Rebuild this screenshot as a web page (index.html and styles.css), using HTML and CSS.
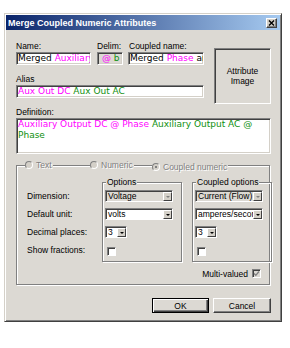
FILE: index.html
```html
<!DOCTYPE html>
<html lang="en">
<head>
    <meta charset="UTF-8">
    <meta name="viewport" content="width=device-width, initial-scale=1.0">
    <title>Merge Coupled Numeric Attributes</title>
    <link rel="stylesheet" href="styles.css">
</head>
<body>
    <div class="dialog">
        <div class="titlebar">
            <span class="title">Merge Coupled Numeric Attributes</span>
            <span class="close">
                <svg width="7" height="6" viewBox="0 0 7 6"><path d="M1 0.5L6 5.5M6 0.5L1 5.5" stroke="#000" stroke-width="1.4"/></svg>
            </span>
        </div>

        <div class="content">
            <div class="top">
                <div class="fields">
                    <div class="names">
                        <div class="field name-field">
                            <label>Name:</label>
                            <div class="edit">Merged <span class="pink">Auxiliary Output DC</span></div>
                        </div>
                        <div class="field delim-field">
                            <label>Delim:</label>
                            <div class="edit readonly">&nbsp;<span class="pink">@</span> <span class="green">b</span></div>
                        </div>
                        <div class="field coupled-field">
                            <label>Coupled name:</label>
                            <div class="edit">Merged <span class="pink">Phase</span> and</div>
                        </div>
                    </div>
                    <div class="field alias-field">
                        <label>Alias</label>
                        <div class="edit"><span class="pink">Aux Out DC</span> <span class="green">Aux Out AC</span></div>
                    </div>
                </div>
                <div class="image-box">Attribute<br>Image</div>
            </div>

            <div class="field definition-field">
                <label>Definition:</label>
                <div class="edit memo"><span class="pink">Auxiliary Output DC @ Phase</span> <span class="green">Auxiliary Output AC @ Phase</span></div>
            </div>

            <div class="groupbox kind">
                <div class="radios">
                    <div class="radio-cell"><span class="radio"><span class="dot"></span><span class="off">Text</span></span></div>
                    <div class="radio-cell"><span class="radio"><span class="dot"></span><span class="off">Numeric</span></span></div>
                    <div class="radio-cell"><span class="radio"><span class="dot checked"></span><span class="off">Coupled numeric</span></span></div>
                </div>

                <div class="opts">
                    <div class="row-labels cells">
                        <div class="cell">Dimension:</div>
                        <div class="cell">Default unit:</div>
                        <div class="cell">Decimal places:</div>
                        <div class="cell">Show fractions:</div>
                    </div>

                    <div class="groupbox optbox">
                        <div class="boxtitle">Options</div>
                        <div class="cells">
                            <div class="combo disabled"><span class="combo-text">Voltage</span><span class="arrow"></span></div>
                            <div class="combo"><span class="combo-text">volts</span><span class="arrow"></span></div>
                            <div class="combo small"><span class="combo-text">3</span><span class="arrow"></span></div>
                            <div class="cell"><span class="check"></span></div>
                        </div>
                    </div>

                    <div class="groupbox optbox">
                        <div class="boxtitle">Coupled options</div>
                        <div class="cells">
                            <div class="combo disabled"><span class="combo-text">Current (Flow)</span><span class="arrow"></span></div>
                            <div class="combo"><span class="combo-text">amperes/second</span><span class="arrow"></span></div>
                            <div class="combo small"><span class="combo-text">3</span><span class="arrow"></span></div>
                            <div class="cell"><span class="check"></span></div>
                        </div>
                    </div>
                </div>

                <div class="multi">
                    <span>Multi-valued</span>
                    <span class="check disabled">
                        <svg width="7" height="7" viewBox="0 0 7 7"><path d="M1 3.5L2.8 5.3L6 1.5" stroke="#808080" stroke-width="1.3" fill="none"/></svg>
                    </span>
                </div>
            </div>

            <div class="buttons">
                <button type="button" class="btn default">OK</button>
                <button type="button" class="btn">Cancel</button>
            </div>
        </div>
    </div>
</body>
</html>
```

FILE: styles.css
```css
body {
    margin: 0;
    padding: 13px 0 0 4px;
    background: #fff;
    font-family: "Liberation Sans", Arial, sans-serif;
    font-size: 8.5px;
    color: #000;
}
.dialog {
    width: 278px;
    box-sizing: border-box;
    padding: 1px;
    background: #dcd9d3;
    border: 1px solid;
    border-color: #d4d0c8 #404040 #404040 #d4d0c8;
    box-shadow: inset 1px 1px #fff, inset -1px -1px #808080;
}
.titlebar {
    height: 15px;
    display: flex;
    align-items: center;
    justify-content: space-between;
    padding: 0 3px 0 2px;
    background: linear-gradient(to right, #0a246a, #a6caf0);
    color: #fff;
    font-weight: bold;
    font-size: 9px;
}
.close {
    width: 11px;
    height: 10px;
    box-sizing: border-box;
    display: flex;
    align-items: center;
    justify-content: center;
    background: #d4d0c8;
    border: 1px solid;
    border-color: #fff #404040 #404040 #fff;
    box-shadow: inset -1px -1px #808080;
}
.content {
    padding: 11px 9px 7px 10px;
}
.top {
    display: grid;
    grid-template-columns: 188px 57px;
    column-gap: 10px;
}
.names {
    display: flex;
}
.name-field {
    width: 75px;
}
.delim-field {
    width: 26px;
    margin-left: 6px;
}
.coupled-field {
    width: 76px;
    margin-left: 5px;
}
label {
    display: block;
    height: 11px;
    line-height: 11px;
}
.coupled-field label {
    padding-left: 1px;
}
.edit {
    height: 13px;
    box-sizing: border-box;
    padding: 0 1px;
    background: #fff;
    border: 1px solid;
    border-color: #808080 #fff #fff #808080;
    box-shadow: inset 1px 1px #404040, inset -1px -1px #d4d0c8;
    font-family: "DejaVu Sans", Verdana, sans-serif;
    font-size: 9px;
    line-height: 11px;
    white-space: nowrap;
    overflow: hidden;
}
.edit.readonly {
    background: #dcd9d3;
}
.alias-field {
    margin-top: 9px;
}
.image-box {
    margin-top: 7px;
    height: 56px;
    box-sizing: border-box;
    display: flex;
    align-items: center;
    justify-content: center;
    text-align: center;
    line-height: 10px;
    border: 1px solid;
    border-color: #808080 #fff #fff #808080;
    box-shadow: inset 1px 1px #404040;
}
.definition-field {
    margin-top: 3px;
}
.edit.memo {
    height: 36px;
    white-space: normal;
}
.pink {
    color: #ff00ff;
}
.green {
    color: #109010;
}

/* etched group boxes */
.groupbox {
    box-sizing: border-box;
    border: 1px solid #808080;
    box-shadow: inset 1px 1px #fff, 1px 1px #fff;
}
.kind {
    width: 254px;
    margin-top: 11px;
    padding: 0 7px 6px 10px;
}
.radios {
    display: grid;
    grid-template-columns: 65px 62px auto;
    height: 10px;
    margin: -6px 0 0 -2px;
}
.radio {
    display: inline-flex;
    align-items: center;
    height: 10px;
    padding-right: 1px;
    background: #dcd9d3;
}
.dot {
    width: 8px;
    height: 8px;
    box-sizing: border-box;
    border-radius: 50%;
    border: 1px solid;
    border-color: #808080 #fff #fff #808080;
    background: #d4d0c8;
    display: flex;
    align-items: center;
    justify-content: center;
}
.dot.checked::after {
    content: "";
    width: 2px;
    height: 2px;
    background: #808080;
}
.off {
    margin-left: 3px;
    color: #808080;
    text-shadow: 1px 1px #fff;
}
.opts {
    display: grid;
    grid-template-columns: 65px 80px 80px;
    column-gap: 10px;
    margin-top: 12px;
}
.cells {
    display: flex;
    flex-direction: column;
    gap: 6px;
}
.row-labels {
    padding-top: 8px;
}
.cell {
    height: 12px;
    line-height: 12px;
}
.optbox {
    padding: 0 8px 5px 2px;
}
.boxtitle {
    width: fit-content;
    height: 10px;
    line-height: 10px;
    margin: -6px 0 3px 1px;
    padding: 0 1px;
    background: #dcd9d3;
}
.combo {
    width: 68px;
    height: 12px;
    box-sizing: border-box;
    display: flex;
    background: #fff;
    border: 1px solid;
    border-color: #808080 #fff #fff #808080;
    box-shadow: inset 1px 1px #404040;
}
.combo.disabled {
    background: #dcd9d3;
}
.combo.small {
    width: 22px;
}
.combo-text {
    flex: 1;
    padding-left: 2px;
    line-height: 10px;
    white-space: nowrap;
    overflow: hidden;
}
.arrow {
    width: 9px;
    margin: 1px 0 0 0;
    box-sizing: border-box;
    display: flex;
    align-items: center;
    justify-content: center;
    background: #d4d0c8;
    border: 1px solid;
    border-color: #fff #404040 #404040 #fff;
}
.arrow::after {
    content: "";
    border: 2px solid transparent;
    border-top: 2px solid #000;
    border-bottom: 0;
}
.combo.disabled .arrow::after {
    border-top-color: #808080;
}
.check {
    display: flex;
    align-items: center;
    justify-content: center;
    width: 9px;
    height: 9px;
    box-sizing: border-box;
    margin: 3px 0 0 2px;
    background: #fff;
    border: 1px solid;
    border-color: #808080 #fff #fff #808080;
    box-shadow: inset 1px 1px #404040;
}
.check.disabled {
    margin: 0;
    background: #dcd9d3;
}
.multi {
    display: flex;
    justify-content: flex-end;
    align-items: center;
    gap: 4px;
    height: 9px;
    margin-top: 7px;
    padding-right: 1px;
}
.buttons {
    display: flex;
    justify-content: flex-end;
    gap: 4px;
    margin-top: 13px;
}
.btn {
    width: 58px;
    height: 15px;
    padding: 0;
    font-family: "Liberation Sans", Arial, sans-serif;
    font-size: 8.5px;
    color: #000;
    background: #dcd9d3;
    border: 1px solid;
    border-color: #fff #404040 #404040 #fff;
    box-shadow: inset -1px -1px #808080;
}
.btn.default {
    width: 57px;
    border-color: #000;
    box-shadow: inset 1px 1px #fff, inset -1px -1px #404040, inset -2px -2px #808080;
}
```
